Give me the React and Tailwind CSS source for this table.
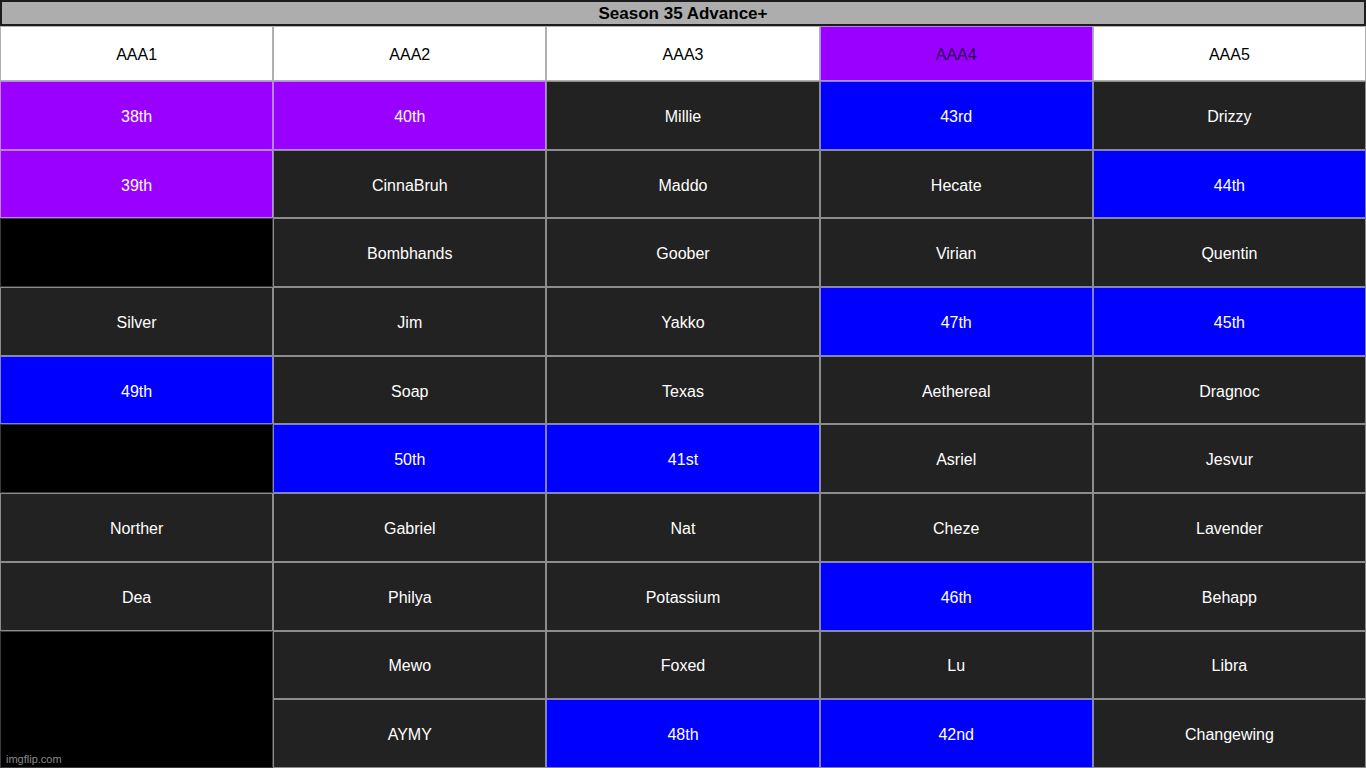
import React from "react";

const P = "p", B = "b", K = "k", D = "d";
const rows = [
  [["38th", P], ["40th", P], ["Millie", D], ["43rd", B], ["Drizzy", D]],
  [["39th", P], ["CinnaBruh", D], ["Maddo", D], ["Hecate", D], ["44th", B]],
  [["", K], ["Bombhands", D], ["Goober", D], ["Virian", D], ["Quentin", D]],
  [["Silver", D], ["Jim", D], ["Yakko", D], ["47th", B], ["45th", B]],
  [["49th", B], ["Soap", D], ["Texas", D], ["Aethereal", D], ["Dragnoc", D]],
  [["", K], ["50th", B], ["41st", B], ["Asriel", D], ["Jesvur", D]],
  [["Norther", D], ["Gabriel", D], ["Nat", D], ["Cheze", D], ["Lavender", D]],
  [["Dea", D], ["Philya", D], ["Potassium", D], ["46th", B], ["Behapp", D]],
  [["", "span"], ["Mewo", D], ["Foxed", D], ["Lu", D], ["Libra", D]],
  [["AYMY", D], ["48th", B], ["42nd", B], ["Changewing", D]],
];

const cls = {
  p: "bg-[#9900ff] border-[#b785f0]",
  b: "bg-[#0000ff] border-[#8080d8]",
  d: "bg-[#222222] border-[#8c8c8c]",
  k: "bg-black border-[#3a3a3a]",
  span: "bg-black border-[#3a3a3a] row-span-2",
};

export default function App() {
  return (
    <div
      className="w-[1366px] h-[768px] bg-black overflow-hidden relative"
      style={{ fontFamily: '"Liberation Sans", Arial, sans-serif' }}
    >
      <div className="h-[26px] bg-[#adadad] border-2 border-[#1c1c1c] flex items-center justify-center text-[17px] font-bold text-black leading-none">
        Season 35 Advance+
      </div>
      <div className="grid grid-cols-5 grid-rows-[55px_repeat(10,1fr)] h-[742px]">
        {["AAA1", "AAA2", "AAA3", "AAA4", "AAA5"].map((h) => (
          <div
            key={h}
            className={
              "flex items-center justify-center pt-[2px] text-[16px] border " +
              (h === "AAA4"
                ? "bg-[#9900ff] text-[#2e0058] border-[#b48ae8]"
                : "bg-white text-black border-[#b0b0b0]")
            }
          >
            {h}
          </div>
        ))}
        {rows.flat().map(([t, c], i) => (
          <div
            key={i}
            className={
              "flex items-center justify-center pt-[3px] text-[16px] text-white border " +
              cls[c]
            }
          >
            {t}
          </div>
        ))}
      </div>
      <div className="absolute left-[6px] bottom-[3px] text-[11px] text-[#8a8a8a] leading-none">
        imgflip.com
      </div>
    </div>
  );
}
